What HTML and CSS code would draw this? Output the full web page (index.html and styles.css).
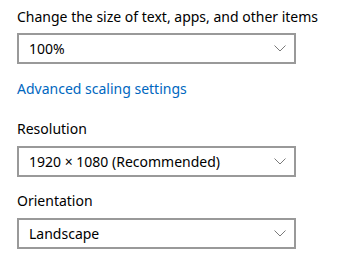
FILE: index.html
```html
<!DOCTYPE html>
<html lang="en">
<head>
    <meta charset="UTF-8">
    <meta name="viewport" content="width=device-width, initial-scale=1.0">
    <title>Display</title>
    <link rel="stylesheet" href="styles.css">
</head>
<body>
<div class="page">
    <div class="label first">Change the size of text, apps, and other items</div>
    <div class="select">
        <span>100%</span>
        <svg class="chevron" width="12" height="7" viewBox="0 0 12 7"><path d="M0.5 0.5 L6 6 L11.5 0.5" fill="none" stroke="#7a7a7a" stroke-width="1"/></svg>
    </div>
    <a class="link" href="#">Advanced scaling settings</a>

    <div class="label section">Resolution</div>
    <div class="select">
        <span>1920 × 1080 (Recommended)</span>
        <svg class="chevron" width="12" height="7" viewBox="0 0 12 7"><path d="M0.5 0.5 L6 6 L11.5 0.5" fill="none" stroke="#7a7a7a" stroke-width="1"/></svg>
    </div>

    <div class="label orient">Orientation</div>
    <div class="select">
        <span>Landscape</span>
        <svg class="chevron" width="12" height="7" viewBox="0 0 12 7"><path d="M0.5 0.5 L6 6 L11.5 0.5" fill="none" stroke="#7a7a7a" stroke-width="1"/></svg>
    </div>
</div>
</body>
</html>
```

FILE: styles.css
```css
body {
    font-family: "Noto Sans", "Open Sans", sans-serif;
    background-color: #ffffff;
    color: #000000;
    margin: 0;
}
.page {
    display: flex;
    flex-direction: column;
    align-items: flex-start;
    padding: 7px 0 0 17px;
}
.label {
    font-size: 14px;
    line-height: 20px;
    height: 20px;
    margin-bottom: 6px;
}
.section {
    margin-top: 20px;
    margin-bottom: 7px;
}
.orient {
    margin-top: 14px;
    margin-bottom: 7px;
}
.select {
    box-sizing: border-box;
    width: 279px;
    height: 31px;
    border: 2px solid #999999;
    display: flex;
    align-items: center;
    justify-content: space-between;
    padding: 0 8px 0 10px;
    font-size: 14px;
}
.chevron {
    display: block;
}
.link {
    margin-top: 15px;
    font-size: 14px;
    line-height: 20px;
    color: #0067c0;
    text-decoration: none;
}
```
